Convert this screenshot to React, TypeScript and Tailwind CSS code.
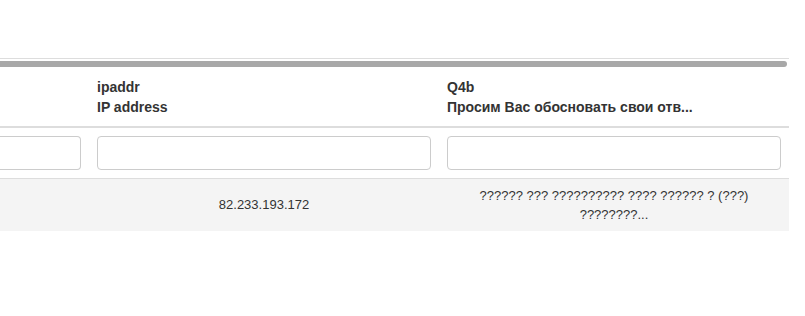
export default function App() {
  return (
    <div className="min-h-screen bg-white font-['Liberation_Sans',Arial,sans-serif] text-[#333]">
      <div className="pt-[58px] w-[789px]">
        <div className="border-t border-[#dddddd] pt-[2px]">
          <div className="h-[6px] w-[787px] bg-[#a8a8a8] rounded-r-[3px]" />
        </div>

        <div className="grid grid-cols-[89px_350px_350px]">
          {/* header */}
          <div className="border-b-2 border-[#dddddd]" />
          <div className="border-b-2 border-[#dddddd] pl-2 pt-[10px] pb-[9px] text-sm font-bold leading-5">
            <div>ipaddr</div>
            <div>IP address</div>
          </div>
          <div className="border-b-2 border-[#dddddd] pl-2 pt-[10px] pb-[9px] text-sm font-bold leading-5">
            <div>Q4b</div>
            <div>Просим Вас обосновать свои отв...</div>
          </div>

          {/* filters */}
          <div className="pr-2 pt-2 pb-2">
            <input className="block w-full h-[34px] border border-l-0 border-[#cccccc] rounded-r bg-white" />
          </div>
          <div className="px-2 pt-2 pb-2">
            <input className="block w-full h-[34px] border border-[#cccccc] rounded bg-white" />
          </div>
          <div className="px-2 pt-2 pb-2">
            <input className="block w-full h-[34px] border border-[#cccccc] rounded bg-white" />
          </div>

          {/* row */}
          <div className="border-t border-[#dddddd] bg-[#f4f4f4] h-[53px]" />
          <div className="border-t border-[#dddddd] bg-[#f4f4f4] h-[53px] flex items-center justify-center text-[13px]">
            82.233.193.172
          </div>
          <div className="border-t border-[#dddddd] bg-[#f4f4f4] h-[53px] flex items-center justify-center text-center text-[13px] leading-[19px] px-8">
            ?????? ??? ?????????? ???? ?????? ? (???) ????????...
          </div>
        </div>
      </div>
    </div>
  );
}
